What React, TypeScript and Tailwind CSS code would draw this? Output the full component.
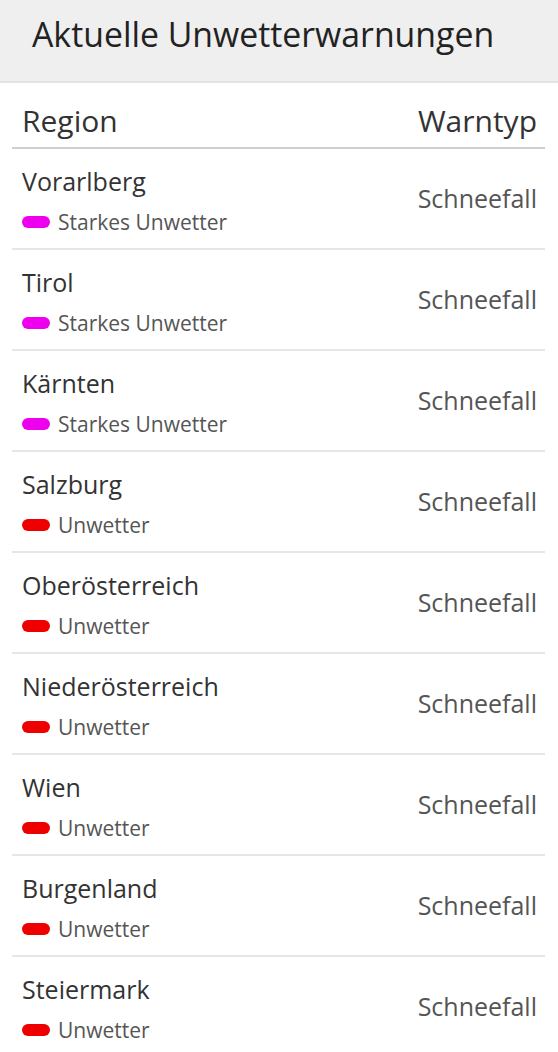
import React from "react";

type Row = { region: string; level: "starkes" | "unwetter" };

const rows: Row[] = [
  { region: "Vorarlberg", level: "starkes" },
  { region: "Tirol", level: "starkes" },
  { region: "Kärnten", level: "starkes" },
  { region: "Salzburg", level: "unwetter" },
  { region: "Oberösterreich", level: "unwetter" },
  { region: "Niederösterreich", level: "unwetter" },
  { region: "Wien", level: "unwetter" },
  { region: "Burgenland", level: "unwetter" },
  { region: "Steiermark", level: "unwetter" },
];

export default function App() {
  return (
    <div
      className="w-[558px] h-[1052px] bg-white overflow-hidden"
      style={{ fontFamily: '"Open Sans", "Noto Sans", sans-serif' }}
    >
      <div className="h-[83px] bg-[#efefef] border-b-2 border-[#e4e4e4] pl-[32px] pt-[11px]">
        <h1 className="text-[33.8px] leading-[46px] text-[#222] font-normal">
          Aktuelle Unwetterwarnungen
        </h1>
      </div>
      <div className="mx-[12px] w-[533px]">
        <div className="flex items-center justify-between h-[66px] border-b-2 border-[#cfcfcf] pl-[10px] pr-[8px] pt-[10px]">
          <span className="text-[30px] text-[#333]">Region</span>
          <span className="text-[30px] text-[#333]">Warntyp</span>
        </div>
        {rows.map((r) => (
          <div
            key={r.region}
            className="flex items-center justify-between h-[101px] border-b-2 border-[#e6e6e6] pl-[10px] pr-[8px]"
          >
            <div className="flex flex-col self-start pt-[15px]">
              <span className="text-[25px] leading-[34px] text-[#333]">{r.region}</span>
              <div className="flex items-center gap-[8px] mt-[12px]">
                <span
                  className={
                    r.level === "starkes"
                      ? "inline-block w-[28px] h-[12px] rounded-full bg-[#ee00ee]"
                      : "inline-block w-[28px] h-[12px] rounded-full bg-[#ee0000]"
                  }
                />
                <span className="text-[21px] leading-[24px] text-[#555]">
                  {r.level === "starkes" ? "Starkes Unwetter" : "Unwetter"}
                </span>
              </div>
            </div>
            <span className="text-[25px] text-[#555]">Schneefall</span>
          </div>
        ))}
      </div>
    </div>
  );
}
